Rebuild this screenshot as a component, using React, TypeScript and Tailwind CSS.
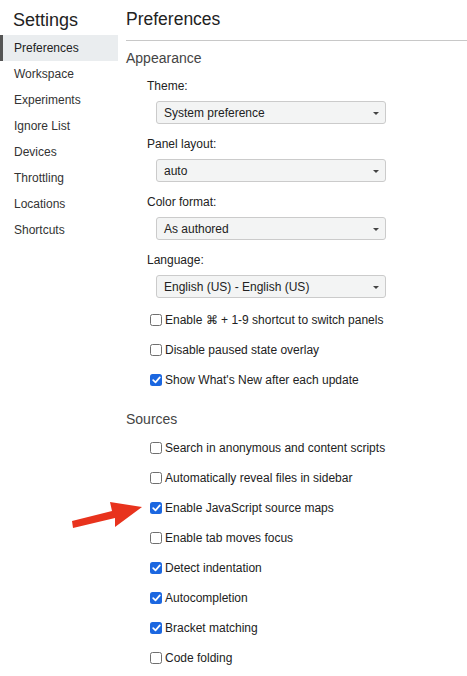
import React from "react";

const navItems = [
  "Preferences",
  "Workspace",
  "Experiments",
  "Ignore List",
  "Devices",
  "Throttling",
  "Locations",
  "Shortcuts",
];

function Select({ value }: { value: string }) {
  return (
    <div className="ml-[30px] flex h-[23px] w-[230px] items-center justify-between rounded-[3px] border border-[#cbcbcb] bg-[#f3f4f4] pl-[7px] pr-[6px] text-[12px] text-[#222]">
      <span>{value}</span>
      <svg width="6" height="3" viewBox="0 0 6 3" className="mt-[1px]">
        <path d="M0 0 L6 0 L3 3 Z" fill="#444" />
      </svg>
    </div>
  );
}

function Field({ label, value, last }: { label: string; value: string; last?: boolean }) {
  return (
    <div className={last ? "mb-[7px]" : "mb-[10px]"}>
      <div className="ml-[21px] flex h-[20px] items-center text-[12px] text-[#222]">{label}</div>
      <div className="mt-[5px]">
        <Select value={value} />
      </div>
    </div>
  );
}

function Check({ label, checked }: { label: string; checked?: boolean }) {
  return (
    <div className="ml-[24px] flex h-[30px] items-center text-[12px] text-[#222]">
      {checked ? (
        <span className="flex h-[12px] w-[12px] items-center justify-center rounded-[2.5px] bg-[#1b67e0]">
          <svg width="9" height="8" viewBox="0 0 9 8">
            <path d="M1.2 4.2 L3.5 6.4 L7.8 1.4" fill="none" stroke="#fff" strokeWidth="1.7" strokeLinecap="round" strokeLinejoin="round" />
          </svg>
        </span>
      ) : (
        <span className="h-[12px] w-[12px] rounded-[2.5px] border border-[#6f6f6f] bg-white" />
      )}
      <span className="ml-[3px]">{label}</span>
    </div>
  );
}

export default function App() {
  return (
    <div
      className="relative flex h-[676px] w-[467px] overflow-hidden bg-white text-[#222]"
      style={{ fontFamily: '"Liberation Sans", Arial, sans-serif' }}
    >
      <aside className="w-[118px] shrink-0">
        <div className="flex h-[35px] items-center pl-[13px] pt-[5px] text-[18px] text-[#222]">Settings</div>
        {navItems.map((item, i) => (
          <div
            key={item}
            className={
              i === 0
                ? "flex h-[26px] items-center border-l-[3px] border-[#555] bg-[#eaedef] pl-[11px] text-[12px] text-[#222]"
                : "flex h-[26px] items-center pl-[14px] text-[12px] text-[#333]"
            }
          >
            {item}
          </div>
        ))}
      </aside>
      <main className="ml-[8px] flex-1">
        <div className="flex h-[41px] items-center border-b border-[#c8c8c8] pb-[1px] text-[17.5px] text-[#222]">
          Preferences
        </div>
        <div className="flex h-[35px] items-center text-[14px] text-[#444]">Appearance</div>
        <Field label="Theme:" value="System preference" />
        <Field label="Panel layout:" value="auto" />
        <Field label="Color format:" value="As authored" />
        <Field label="Language:" value="English (US) - English (US)" last />
        <Check label="Enable ⌘ + 1-9 shortcut to switch panels" />
        <Check label="Disable paused state overlay" />
        <Check label="Show What's New after each update" checked />
        <div className="mb-[4px] mt-[14px] flex h-[20px] items-center text-[14px] text-[#444]">Sources</div>
        <Check label="Search in anonymous and content scripts" />
        <Check label="Automatically reveal files in sidebar" />
        <Check label="Enable JavaScript source maps" checked />
        <Check label="Enable tab moves focus" />
        <Check label="Detect indentation" checked />
        <Check label="Autocompletion" checked />
        <Check label="Bracket matching" checked />
        <Check label="Code folding" />
      </main>
      <svg className="pointer-events-none absolute left-0 top-0" width="467" height="676">
        <polygon
          points="72,521 112,511 110,502 142,507 115,527 115,518 73,528"
          fill="#e8331d"
        />
      </svg>
    </div>
  );
}
